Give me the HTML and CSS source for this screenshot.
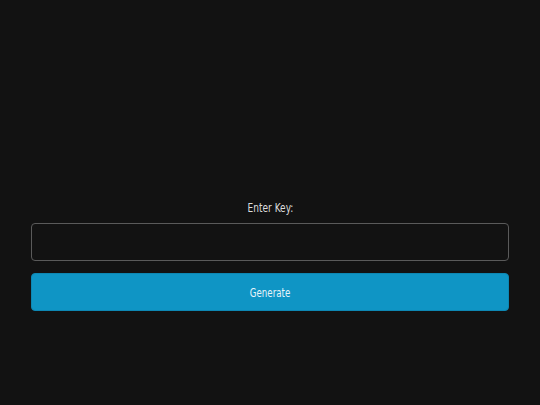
FILE: index.html
```html
<!DOCTYPE html>
<html>
<head>
<meta charset="utf-8">
<link rel="stylesheet" href="styles.css">
</head>
<body>
<div class="page">
  <form class="form">
    <label class="label" for="key"><span class="narrow">Enter Key:</span></label>
    <input class="input" id="key" type="text">
    <button class="button" type="button"><span class="narrow narrow-btn">Generate</span></button>
  </form>
</div>
</body>
</html>
```
FILE: styles.css
```css
html, body {
  margin: 0;
  padding: 0;
  background: #121212;
  height: 100%;
}
.page {
  padding: 200px 31px 0 31px;
}
.form {
  display: flex;
  flex-direction: column;
  font-family: "DejaVu Sans", sans-serif;
  font-size: 12px;
}
.narrow {
  display: inline-block;
  transform: scaleX(0.75);
}
.narrow-btn {
  transform: scaleX(0.72);
}
.label {
  color: #dcdcdc;
  text-align: center;
  line-height: 16px;
  margin-bottom: 7px;
}
.input {
  box-sizing: border-box;
  height: 38px;
  width: 100%;
  background: #121212;
  border: 1px solid #5a5a5a;
  border-radius: 4px;
  color: #ddd;
  padding: 0 10px;
  font: inherit;
  outline: none;
}
.button {
  box-sizing: border-box;
  margin-top: 12px;
  height: 38px;
  width: 100%;
  padding-top: 2px;
  background: #0f95c5;
  border: 1px solid #0d87b3;
  border-radius: 4px;
  color: #e6f4fa;
  font: inherit;
  cursor: pointer;
}
```
